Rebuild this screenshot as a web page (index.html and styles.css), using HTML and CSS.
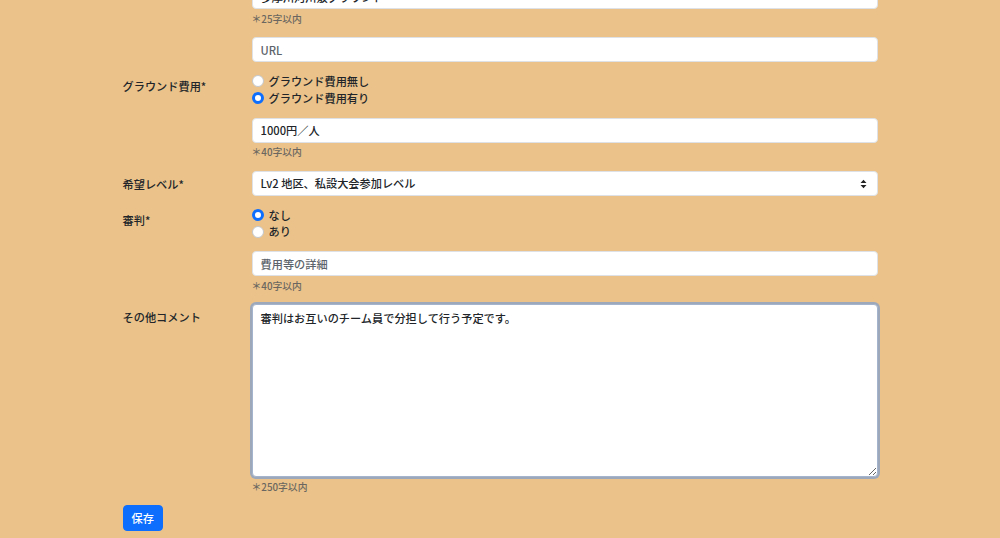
FILE: index.html
```html
<!DOCTYPE html>
<html lang="ja">
<head>
    <meta charset="UTF-8">
    <meta name="viewport" content="width=device-width, initial-scale=1.0">
    <title>募集編集</title>
    <link rel="stylesheet" href="styles.css">
</head>
<body>
    <form id="main-form">
        <div class="form-row">
            <div class="form-label"></div>
            <div class="form-field">
                <input type="text" class="form-control" value="多摩川河川敷グラウンド">
                <div class="form-text">＊25字以内</div>
            </div>
        </div>

        <div class="form-row">
            <div class="form-label"></div>
            <div class="form-field">
                <input type="text" class="form-control" placeholder="URL">
            </div>
        </div>

        <div class="form-row">
            <label class="form-label">グラウンド費用*</label>
            <div class="form-field">
                <label class="form-check"><input type="radio" name="ground"><span>グラウンド費用無し</span></label>
                <label class="form-check"><input type="radio" name="ground" checked><span>グラウンド費用有り</span></label>
            </div>
        </div>

        <div class="form-row">
            <div class="form-label"></div>
            <div class="form-field">
                <input type="text" class="form-control" value="1000円／人">
                <div class="form-text">＊40字以内</div>
            </div>
        </div>

        <div class="form-row">
            <label class="form-label">希望レベル*</label>
            <div class="form-field select-wrap">
                <select class="form-control form-select">
                    <option>Lv2 地区、私設大会参加レベル</option>
                </select>
                <svg class="select-arrow" width="7" height="10" viewBox="0 0 7 10">
                    <path d="M0.5 4 L3.5 0.8 L6.5 4 Z M0.5 6 L3.5 9.2 L6.5 6 Z" fill="#222"/>
                </svg>
            </div>
        </div>

        <div class="form-row">
            <label class="form-label">審判*</label>
            <div class="form-field">
                <label class="form-check"><input type="radio" name="referee" checked><span>なし</span></label>
                <label class="form-check"><input type="radio" name="referee"><span>あり</span></label>
            </div>
        </div>

        <div class="form-row">
            <div class="form-label"></div>
            <div class="form-field">
                <input type="text" class="form-control" placeholder="費用等の詳細">
                <div class="form-text">＊40字以内</div>
            </div>
        </div>

        <div class="form-row">
            <label class="form-label">その他コメント</label>
            <div class="form-field">
                <textarea class="form-control comment">審判はお互いのチーム員で分担して行う予定です。</textarea>
                <div class="form-text">＊250字以内</div>
            </div>
        </div>

        <button type="button" class="btn-save">保存</button>
    </form>
</body>
</html>
```

FILE: styles.css
```css
html, body{
    margin: 0;
    padding: 0;
    height: 100%;
    overflow: hidden;
}

body{
    background-color: #eac28a;
    color: #212529;
    font-family: "Noto Sans CJK JP", "Noto Sans", sans-serif;
    font-size: 11.2px;
    font-weight: 500;
    line-height: 1.5;
}

/* page is shown scrolled, first field cut at the top */
#main-form{
    width: 755px;
    margin: -16px auto 0;
}

.form-row{
    display: grid;
    grid-template-columns: 129px 626px;
    margin-bottom: 11px;
}

.form-label{
    padding-top: 5px;
    line-height: 16.8px;
}

.form-control{
    display: block;
    box-sizing: border-box;
    width: 100%;
    height: 25px;
    margin: 0;
    padding: 4px 8px;
    font-family: inherit;
    font-size: 11.2px;
    font-weight: 500;
    line-height: 15px;
    color: #212529;
    background-color: #ffffff;
    border: 1px solid #dee2e6;
    border-radius: 4px;
    outline: none;
}

.form-control::placeholder{
    color: #5c636a;
}

.select-wrap{
    position: relative;
}

.form-select{
    appearance: none;
    -webkit-appearance: none;
}

.select-arrow{
    position: absolute;
    right: 11px;
    top: 8px;
}

.comment{
    height: 173px;
    padding: 5px 8px;
    line-height: 16.8px;
    border-color: #a4b4cc;
    box-shadow: 0 0 0 2px rgba(150, 165, 192, 0.9);
    resize: vertical;
}

.form-text{
    margin-top: 2.5px;
    font-size: 9.8px;
    line-height: 14.5px;
    color: #6b6760;
}

.form-check{
    display: flex;
    align-items: center;
    height: 16.8px;
    font-size: 11.2px;
}

.form-check input{
    appearance: none;
    -webkit-appearance: none;
    box-sizing: border-box;
    width: 12px;
    height: 12px;
    margin: 0 5px 0 0;
    border: 1px solid #c4c8cc;
    border-radius: 50%;
    background-color: #ffffff;
}

.form-check input:checked{
    border: 3.5px solid #0d6efd;
    background-color: #ffffff;
}

.btn-save{
    display: block;
    height: 26px;
    padding: 4px 8px;
    font-family: inherit;
    font-size: 11.2px;
    font-weight: 500;
    line-height: 16px;
    color: #ffffff;
    background-color: #0d6efd;
    border: 1px solid #0d6efd;
    border-radius: 4px;
}
```
